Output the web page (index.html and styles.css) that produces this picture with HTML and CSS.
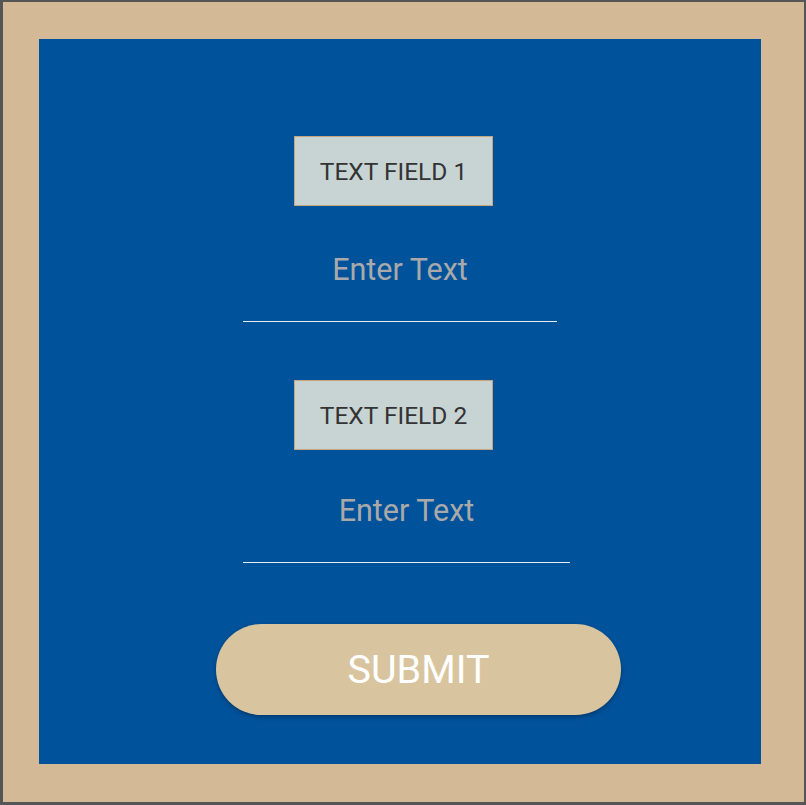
FILE: index.html
```html
<!DOCTYPE html>
<html>
<head>
<meta charset="utf-8">
<link rel="stylesheet" href="styles.css">
</head>
<body>
<div class="frame">
  <form class="panel">
    <div class="label">TEXT FIELD 1</div>
    <input class="field field-1" type="text" placeholder="Enter Text">
    <div class="label label-2">TEXT FIELD 2</div>
    <input class="field field-2" type="text" placeholder="Enter Text">
    <button class="submit" type="button">SUBMIT</button>
  </form>
</div>
</body>
</html>
```

FILE: styles.css
```css
html, body {
  margin: 0;
  padding: 0;
}
body {
  width: 806px;
  height: 805px;
  box-sizing: border-box;
  border-style: solid;
  border-color: #555555;
  border-width: 2px 2px 3px 3px;
  background: #d4b996;
  font-family: Roboto, "Liberation Sans", sans-serif;
}
.frame {
  padding: 37px 43px 38px 36px;
  height: 100%;
  box-sizing: border-box;
}
.panel {
  margin: 0;
  background: #00529b;
  width: 722px;
  height: 725px;
  display: flex;
  flex-direction: column;
  align-items: flex-start;
  padding-top: 97px;
  box-sizing: border-box;
}
.label {
  margin-left: 255px;
  width: 199px;
  height: 70px;
  box-sizing: border-box;
  border: 1px solid #c4a57c;
  background: #c8d3d4;
  color: #333333;
  font-size: 24.5px;
  display: flex;
  align-items: center;
  justify-content: center;
}
.label-2 {
  margin-top: 58px;
}
.field {
  margin: 30px 0 0 204px;
  box-sizing: border-box;
  height: 86px;
  padding: 16px 0 35px;
  border: none;
  border-bottom: 1px solid #e6eef5;
  background: transparent;
  outline: none;
  font-family: Roboto, "Liberation Sans", sans-serif;
  font-size: 30.5px;
  line-height: 34px;
  color: #a9a9a9;
  text-align: center;
}
.field::placeholder {
  color: #a9a9a9;
  opacity: 1;
}
.field-1 {
  width: 314px;
}
.field-2 {
  width: 327px;
  margin-top: 27px;
}
.submit {
  margin: 61px 0 0 177px;
  width: 405px;
  height: 91px;
  border: none;
  border-radius: 46px;
  background: #d8c59f;
  color: #ffffff;
  font-family: Roboto, "Liberation Sans", sans-serif;
  font-size: 39.5px;
  box-shadow: 0 2px 4px rgba(0, 0, 0, 0.3);
  padding: 0;
}
```
